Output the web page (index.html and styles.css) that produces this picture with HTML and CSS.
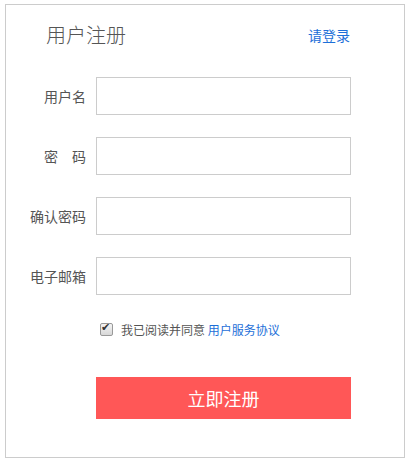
FILE: index.html
```html
<!DOCTYPE html>
<html lang="zh-CN">
<head>
    <meta charset="UTF-8">
    <meta name="viewport" content="width=device-width, initial-scale=1.0">
    <title>用户注册</title>
    <link rel="stylesheet" href="styles.css">
</head>
<body>
    <div class="box">
        <div class="head">
            <h1>用户注册</h1>
            <a href="#" class="login">请登录</a>
        </div>

        <form class="form">
            <label class="row">
                <span class="name">用户名</span>
                <input type="text">
            </label>
            <label class="row">
                <span class="name">密&emsp;码</span>
                <input type="password">
            </label>
            <label class="row">
                <span class="name">确认密码</span>
                <input type="password">
            </label>
            <label class="row">
                <span class="name">电子邮箱</span>
                <input type="text">
            </label>

            <div class="agree">
                <input type="checkbox" checked>
                <span>我已阅读并同意 <a href="#">用户服务协议</a></span>
            </div>

            <button type="button" class="submit">立即注册</button>
        </form>
    </div>
</body>
</html>
```

FILE: styles.css
```css
body {
    margin: 0;
    padding: 4px 5px;
    font-family: "Noto Sans CJK SC", "Microsoft YaHei", sans-serif;
    color: #555;
    background-color: #fff;
}
.box {
    box-sizing: border-box;
    width: 400px;
    height: 454px;
    border: 1px solid #ccc;
}
.head {
    display: flex;
    justify-content: space-between;
    align-items: center;
    margin-top: 15px;
    padding: 0 54px 0 40px;
    height: 30px;
}
h1 {
    margin: 0;
    font-size: 20px;
    font-weight: 300;
    line-height: 30px;
    color: #555;
}
a {
    color: #1d6fd8;
    text-decoration: none;
}
.login {
    font-size: 14px;
    line-height: 20px;
}
.form {
    margin: 27px 0 0;
}
.row {
    display: flex;
    align-items: center;
    margin-bottom: 22px;
}
.name {
    width: 80px;
    margin-right: 10px;
    text-align: right;
    font-size: 14px;
    color: #555;
}
.row input {
    box-sizing: border-box;
    width: 255px;
    height: 38px;
    margin: 0;
    padding: 0 8px;
    border: 1px solid #ccc;
    outline: none;
    font-size: 14px;
}
.agree {
    display: flex;
    align-items: center;
    height: 20px;
    margin: 24px 0 0 94px;
    font-size: 12px;
    color: #555;
}
.agree input {
    appearance: none;
    box-sizing: border-box;
    position: relative;
    width: 13px;
    height: 13px;
    margin: 0 8px 0 0;
    border: 1px solid #999;
    border-radius: 2px;
    background: linear-gradient(#f4f4f4, #d8d8d8);
}
.agree input:checked::after {
    content: "✔";
    position: absolute;
    left: 0;
    top: -3px;
    font-size: 11px;
    color: #333;
}
.submit {
    display: block;
    width: 255px;
    height: 42px;
    margin: 38px 0 0 90px;
    border: none;
    background-color: #ff5757;
    color: #fff;
    font-family: inherit;
    font-size: 18px;
    cursor: pointer;
}
```
